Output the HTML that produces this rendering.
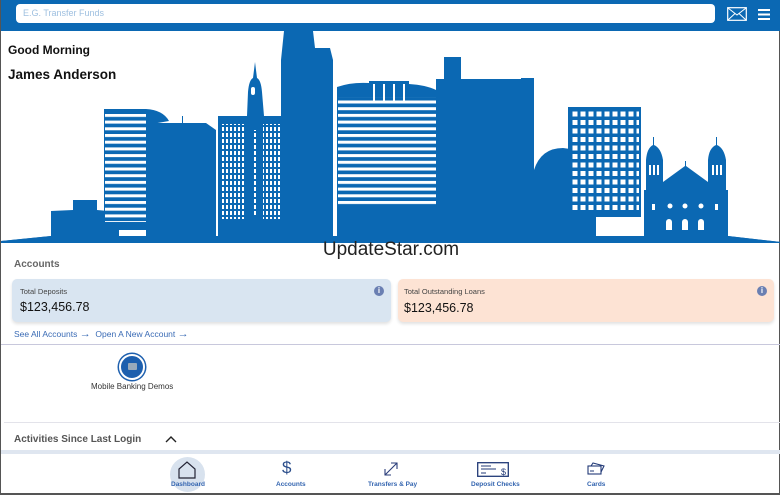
<!DOCTYPE html>
<html><head><meta charset="utf-8"><style>
*{margin:0;padding:0;box-sizing:border-box}
body{width:780px;height:495px;overflow:hidden;background:#fff;font-family:"Liberation Sans",sans-serif;position:relative;border-left:1px solid #555;border-right:1px solid #555}
.a{position:absolute}
</style></head><body>
<div class="a" style="left:0;top:0;width:780px;height:31px;background:#0b68b3"></div>
<div class="a" style="left:15px;top:4px;width:699px;height:19px;background:#fff;border-radius:4px;font-size:9px;color:#9fc0e0;padding:4px 7px">E.G. Transfer Funds</div>
<svg class="a" style="left:726px;top:7px" width="20" height="14"><rect x="0.7" y="0.7" width="18.6" height="12.6" fill="none" stroke="#fff" stroke-width="1.2"/><path d="M1 1 L10 8 L19 1 M1 13 L8 6.5 M19 13 L12 6.5" fill="none" stroke="#fff" stroke-width="1"/></svg>
<svg class="a" style="left:757px;top:9px" width="12" height="11"><rect y="0" width="12" height="2" fill="#fff"/><rect y="4.5" width="12" height="2" fill="#fff"/><rect y="9" width="12" height="2" fill="#fff"/></svg>

<svg class="a" style="left:0;top:31px" width="780" height="213" viewBox="0 31 780 213">
<defs>
<pattern id="w" x="570" y="110" width="8" height="8.5" patternUnits="userSpaceOnUse"><rect x="1.5" y="1.5" width="5" height="5" fill="#fff"/></pattern>
<pattern id="s" x="0" y="0" width="3" height="6.7" patternUnits="userSpaceOnUse"><rect x="0" y="0" width="3" height="3" fill="#fff"/></pattern>
<pattern id="ws" x="0" y="0" width="4" height="6" patternUnits="userSpaceOnUse"><rect x="1" y="1" width="2" height="4" fill="#fff"/></pattern>
</defs>
<g fill="#0b68b3">
<path d="M0 243 L0 241 L50 236 L50 211 L72 210 L72 200 L96 200 L96 210 L118 212 L118 243 Z"/>
<path d="M103 109 L145 109 Q162 110 168 121 L145 125 L145 230 L103 230 Z"/>
<path d="M145 123 L205 123 L215 130 L215 243 L145 243 Z"/>
<rect x="181" y="116" width="1" height="8"/>
<rect x="217" y="116" width="63" height="127"/>
<path d="M246 116 L247 92 Q248 80 252 78 L254 62 L256 78 Q260 80 261 92 L263 116 Z"/>
<path d="M283 31 L312 31 L314 48 L329 48 L332 60 L332 243 L280 243 L280 60 Z"/>
<path d="M336 87 Q350 82 368 83 L368 81 L408 81 L408 84 Q425 85 435 90 L435 243 L336 243 Z"/>
<path d="M443 57 L460 57 L460 79 L520 79 L520 78 L533 78 L533 243 L435 243 L435 79 L443 79 Z"/>
<path d="M533 243 L533 170 Q540 148 562 148 Q585 150 595 170 L595 243 Z"/>
<rect x="567" y="107" width="73" height="110"/>
<path d="M643 243 L643 190 L645 190 L645 160 Q646 148 652 145 L652 137 L653 137 L653 145 Q660 148 662 160 L662 182 L684 166 L684 161 L685 161 L685 166 L707 182 L707 160 Q708 148 715 145 L715 137 L716 137 L716 145 Q723 148 725 160 L725 190 L727 190 L727 236 L780 242 L780 243 Z"/>
<path d="M0 243 L0 241 L50 236 L727 236 L780 242 L780 243 Z"/>
</g>
<rect x="104" y="114" width="41" height="108" fill="url(#s)"/>
<rect x="221" y="124" width="22" height="95" fill="url(#ws)"/>
<rect x="251" y="130" width="6" height="85" fill="url(#ws)"/>
<rect x="262" y="124" width="17" height="95" fill="url(#ws)"/>
<rect x="250" y="87" width="4" height="8" fill="#fff" rx="2"/>
<rect x="337" y="97" width="98" height="108" fill="url(#s)"/>
<rect x="372" y="84" width="2" height="18" fill="#fff"/><rect x="382" y="84" width="2" height="18" fill="#fff"/><rect x="392" y="84" width="2" height="18" fill="#fff"/><rect x="402" y="84" width="2" height="18" fill="#fff"/>
<rect x="570" y="110" width="68" height="103" fill="url(#w)"/>
<g fill="#fff">
<rect x="648" y="165" width="2" height="10"/><rect x="652" y="165" width="2" height="10"/><rect x="656" y="165" width="2" height="10"/>
<rect x="711" y="165" width="2" height="10"/><rect x="715" y="165" width="2" height="10"/><rect x="719" y="165" width="2" height="10"/>
<circle cx="669" cy="206" r="2.5"/><circle cx="684" cy="206" r="2.5"/><circle cx="700" cy="206" r="2.5"/>
<rect x="651" y="204" width="3" height="6"/><rect x="714" y="204" width="3" height="6"/>
<path d="M665 230 V222 a3 3 0 0 1 6 0 V230Z M681 230 V222 a3 3 0 0 1 6 0 V230Z M697 230 V222 a3 3 0 0 1 6 0 V230Z"/>
</g>
</svg>
<div class="a" style="left:7px;top:43px;font-size:12px;font-weight:bold;color:#111">Good Morning</div>
<div class="a" style="left:7px;top:67px;font-size:13.5px;font-weight:bold;color:#111">James Anderson</div>
<div class="a" style="left:0;top:239px;width:780px;text-align:center;font-size:19px;color:#222">UpdateStar.com</div>

<div class="a" style="left:13px;top:259px;font-size:10px;font-weight:bold;color:#666">Accounts</div>
<div class="a" style="left:11px;top:279px;width:379px;height:43px;background:#d9e5f1;border-radius:5px;box-shadow:0 2px 3px rgba(0,0,0,.12)">
<div class="a" style="left:8px;top:8px;font-size:7.5px;color:#444">Total Deposits</div>
<div class="a" style="left:8px;top:21px;font-size:12.5px;color:#111">$123,456.78</div>
<div class="a" style="left:362px;top:7px;width:10px;height:10px;border-radius:50%;background:#6a7fb2;color:#fff;font-size:8px;font-weight:bold;text-align:center;line-height:10px">i</div></div>
<div class="a" style="left:397px;top:279px;width:376px;height:43px;background:#fde3d4;border-radius:5px;box-shadow:0 2px 3px rgba(0,0,0,.12)">
<div class="a" style="left:6px;top:8px;font-size:7.5px;color:#444">Total Outstanding Loans</div>
<div class="a" style="left:6px;top:22px;font-size:12.5px;color:#111">$123,456.78</div>
<div class="a" style="left:359px;top:7px;width:10px;height:10px;border-radius:50%;background:#6a7fb2;color:#fff;font-size:8px;font-weight:bold;text-align:center;line-height:10px">i</div></div>
<div class="a" style="left:13px;top:328px;font-size:8.5px;color:#3a6bb5">See All Accounts <span style="font-size:11px">→</span>&nbsp;&nbsp;Open A New Account <span style="font-size:11px">→</span></div>
<div class="a" style="left:0;top:344px;width:780px;height:1px;background:#c8c8dc"></div>
<div class="a" style="left:118px;top:354px;width:26px;height:26px;border-radius:50%;background:#1d5fae;border:2px solid #fff;box-shadow:0 0 0 1.5px #1d5fae"><div class="a" style="left:7px;top:7px;width:9px;height:7px;background:#9ab;border-radius:1px"></div></div>
<div class="a" style="left:90px;top:382px;font-size:8px;color:#333">Mobile Banking Demos</div>
<div class="a" style="left:3px;top:422px;width:777px;height:1px;background:#e3e3ea"></div>
<div class="a" style="left:13px;top:434px;font-size:10px;font-weight:bold;color:#555">Activities Since Last Login</div>
<svg class="a" style="left:164px;top:435px" width="12" height="8"><path d="M1 7 L6 2 L11 7" fill="none" stroke="#222" stroke-width="1.4"/></svg>
<div class="a" style="left:0;top:450px;width:780px;height:4px;background:#dfe6f0"></div>
<div class="a" style="left:169px;top:457px;width:35px;height:35px;border-radius:50%;background:#d8e2ee"></div>
<svg class="a" style="left:176px;top:461px" width="20" height="18"><path d="M2 17 L2 8 L10 1 L18 8 L18 17 Z" fill="none" stroke="#223" stroke-width="1.2"/></svg>
<div class="a" style="left:281px;top:458px;font-size:17px;color:#2a4d8a">$</div>
<svg class="a" style="left:382px;top:461px" width="16" height="16"><path d="M2 14 L14 2 M8 2 L14 2 L14 8 M2 8 L2 14 L8 14" fill="none" stroke="#2a3d7a" stroke-width="1.1"/></svg>
<svg class="a" style="left:476px;top:462px" width="32" height="15"><rect x="0.7" y="0.7" width="30.6" height="13.6" fill="none" stroke="#223a77" stroke-width="1.3"/><path d="M4 4 H14 M4 7 H19 M4 11 H9" stroke="#223a77" stroke-width="1"/><text x="24" y="13" font-size="9" fill="#223a77" font-family="Liberation Sans">$</text></svg>
<svg class="a" style="left:586px;top:462px" width="18" height="14"><rect x="1" y="4" width="13" height="8" fill="none" stroke="#223a77" stroke-width="1.1"/><path d="M4 4 L6 1 L17 4 L14 10" fill="none" stroke="#223a77" stroke-width="1.1"/><path d="M3 9 H7" stroke="#223a77"/></svg>
<div class="a" style="top:481px;left:0;width:780px;font-size:6.5px;font-weight:bold;color:#3465b0">
<span class="a" style="left:170px">Dashboard</span><span class="a" style="left:275px">Accounts</span><span class="a" style="left:367px">Transfers &amp; Pay</span><span class="a" style="left:470px">Deposit Checks</span><span class="a" style="left:586px">Cards</span></div>
<div class="a" style="left:0;top:493px;width:780px;height:2px;background:#555"></div>
</body></html>
